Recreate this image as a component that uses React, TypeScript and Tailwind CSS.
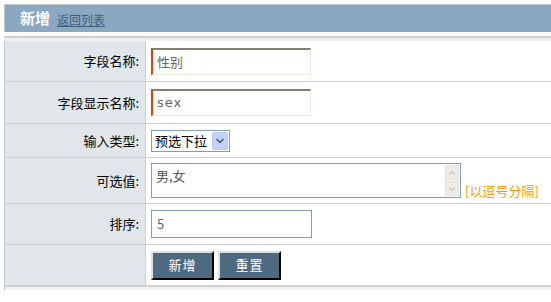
import { ChevronDown, ChevronUp } from "lucide-react";

const font = { fontFamily: '"Noto Sans CJK SC", "Liberation Sans", sans-serif' };

function Label({ text }: { text: string }) {
  return (
    <div className="w-[141px] shrink-0 bg-[#e1e6ea] border-r border-[#d0d0d0] flex items-center justify-end pr-[6px] text-[13px] text-black">
      {text}
    </div>
  );
}

export default function App() {
  return (
    <div className="w-[551px] h-[302px] bg-white pt-[4px] pl-[4px]" style={font}>
      {/* title bar */}
      <div className="h-[28px] bg-[#8aa8c0] border-t border-l border-[#c8c8c8] flex items-center pl-[15px] gap-[7px]">
        <span className="text-white font-bold text-[15px]">新增</span>
        <span className="text-[#3e5f7e] text-[12px] underline mt-[2px]">返回列表</span>
      </div>

      <div className="mt-[4px] border-t-2 border-[#d0d0d0] h-[5px] bg-[#f0f0f0]" />

      {/* form */}
      <div className="border-l border-[#c8c8c8]">
        <div className="flex h-[41px] border-b border-[#cccccc]">
          <Label text="字段名称:" />
          <div className="flex items-center pl-[5px]">
            <div className="w-[160px] h-[27px] border-[#eceada] border border-t-2 border-t-[#857f70] border-l-2 border-l-[#ff3300] flex items-center pl-[4px] text-[13px] text-[#666]">
              性别
            </div>
          </div>
        </div>
        <div className="flex h-[42px] border-b border-[#cccccc]">
          <Label text="字段显示名称:" />
          <div className="flex items-center pl-[5px]">
            <div className="w-[160px] h-[27px] border-[#eceada] border border-t-2 border-t-[#857f70] border-l-2 border-l-[#ff3300] flex items-center pl-[4px] text-[13px] text-[#666] tracking-[1px]" style={{ fontFamily: '"DejaVu Sans", sans-serif' }}>
              sex
            </div>
          </div>
        </div>
        <div className="flex h-[34px] border-b border-[#cccccc]">
          <Label text="输入类型:" />
          <div className="flex items-center pl-[5px]">
            <div className="w-[79px] h-[22px] border border-[#7f9db9] flex items-center justify-between pl-[3px] pr-[1px] text-[13px] text-black">
              <span>预选下拉</span>
              <span className="w-[16px] h-[18px] bg-[#c1d3fb] border border-[#b6c9f0] rounded-[2px] flex items-center justify-center">
                <ChevronDown size={12} strokeWidth={3.5} className="text-[#4d6185]" />
              </span>
            </div>
          </div>
        </div>
        <div className="flex h-[46px] border-b border-[#cccccc]">
          <Label text="可选值:" />
          <div className="flex items-end pl-[5px] pb-[5px]">
            <div className="w-[310px] h-[35px] border border-[#7f9db9] flex justify-between">
              <span className="text-[13px] text-[#555] pl-[4px] pt-[2px]">男,女</span>
              <div className="w-[16px] flex flex-col gap-[1px] p-[1px] bg-[#fbfbf9]">
                <span className="flex-1 bg-[#eeede5] border border-[#e4e3da] flex items-center justify-center">
                  <ChevronUp size={10} strokeWidth={3} className="text-[#c8c8c0]" />
                </span>
                <span className="flex-1 bg-[#eeede5] border border-[#e4e3da] flex items-center justify-center">
                  <ChevronDown size={10} strokeWidth={3} className="text-[#c8c8c0]" />
                </span>
              </div>
            </div>
            <span className="text-[#ff9900] text-[13px] ml-[4px] mb-[-2px]">[以逗号分隔]</span>
          </div>
        </div>
        <div className="flex h-[41px] border-b border-[#cccccc]">
          <Label text="排序:" />
          <div className="flex items-center pl-[5px]">
            <div className="w-[161px] h-[28px] border border-[#7f9db9] flex items-center pl-[5px] text-[13px] text-[#666]">
              5
            </div>
          </div>
        </div>
        <div className="flex h-[40px]">
          <div className="w-[141px] shrink-0 bg-[#e1e6ea] border-r border-[#d0d0d0]" />
          <div className="flex items-center pl-[5px] gap-[4px]">
            <button className="w-[63px] h-[29px] bg-[#4d6a80] text-white text-[13px] border-2 border-t-[#e0e0e0] border-l-[#e0e0e0] border-r-black border-b-black tracking-[1px]">
              新增
            </button>
            <button className="w-[63px] h-[29px] bg-[#4d6a80] text-white text-[13px] border-2 border-t-[#e0e0e0] border-l-[#e0e0e0] border-r-black border-b-black tracking-[1px]">
              重置
            </button>
          </div>
        </div>
        <div className="border-t-2 border-[#d0d0d0] h-[5px] bg-[#f0f0f0]" />
      </div>
    </div>
  );
}
